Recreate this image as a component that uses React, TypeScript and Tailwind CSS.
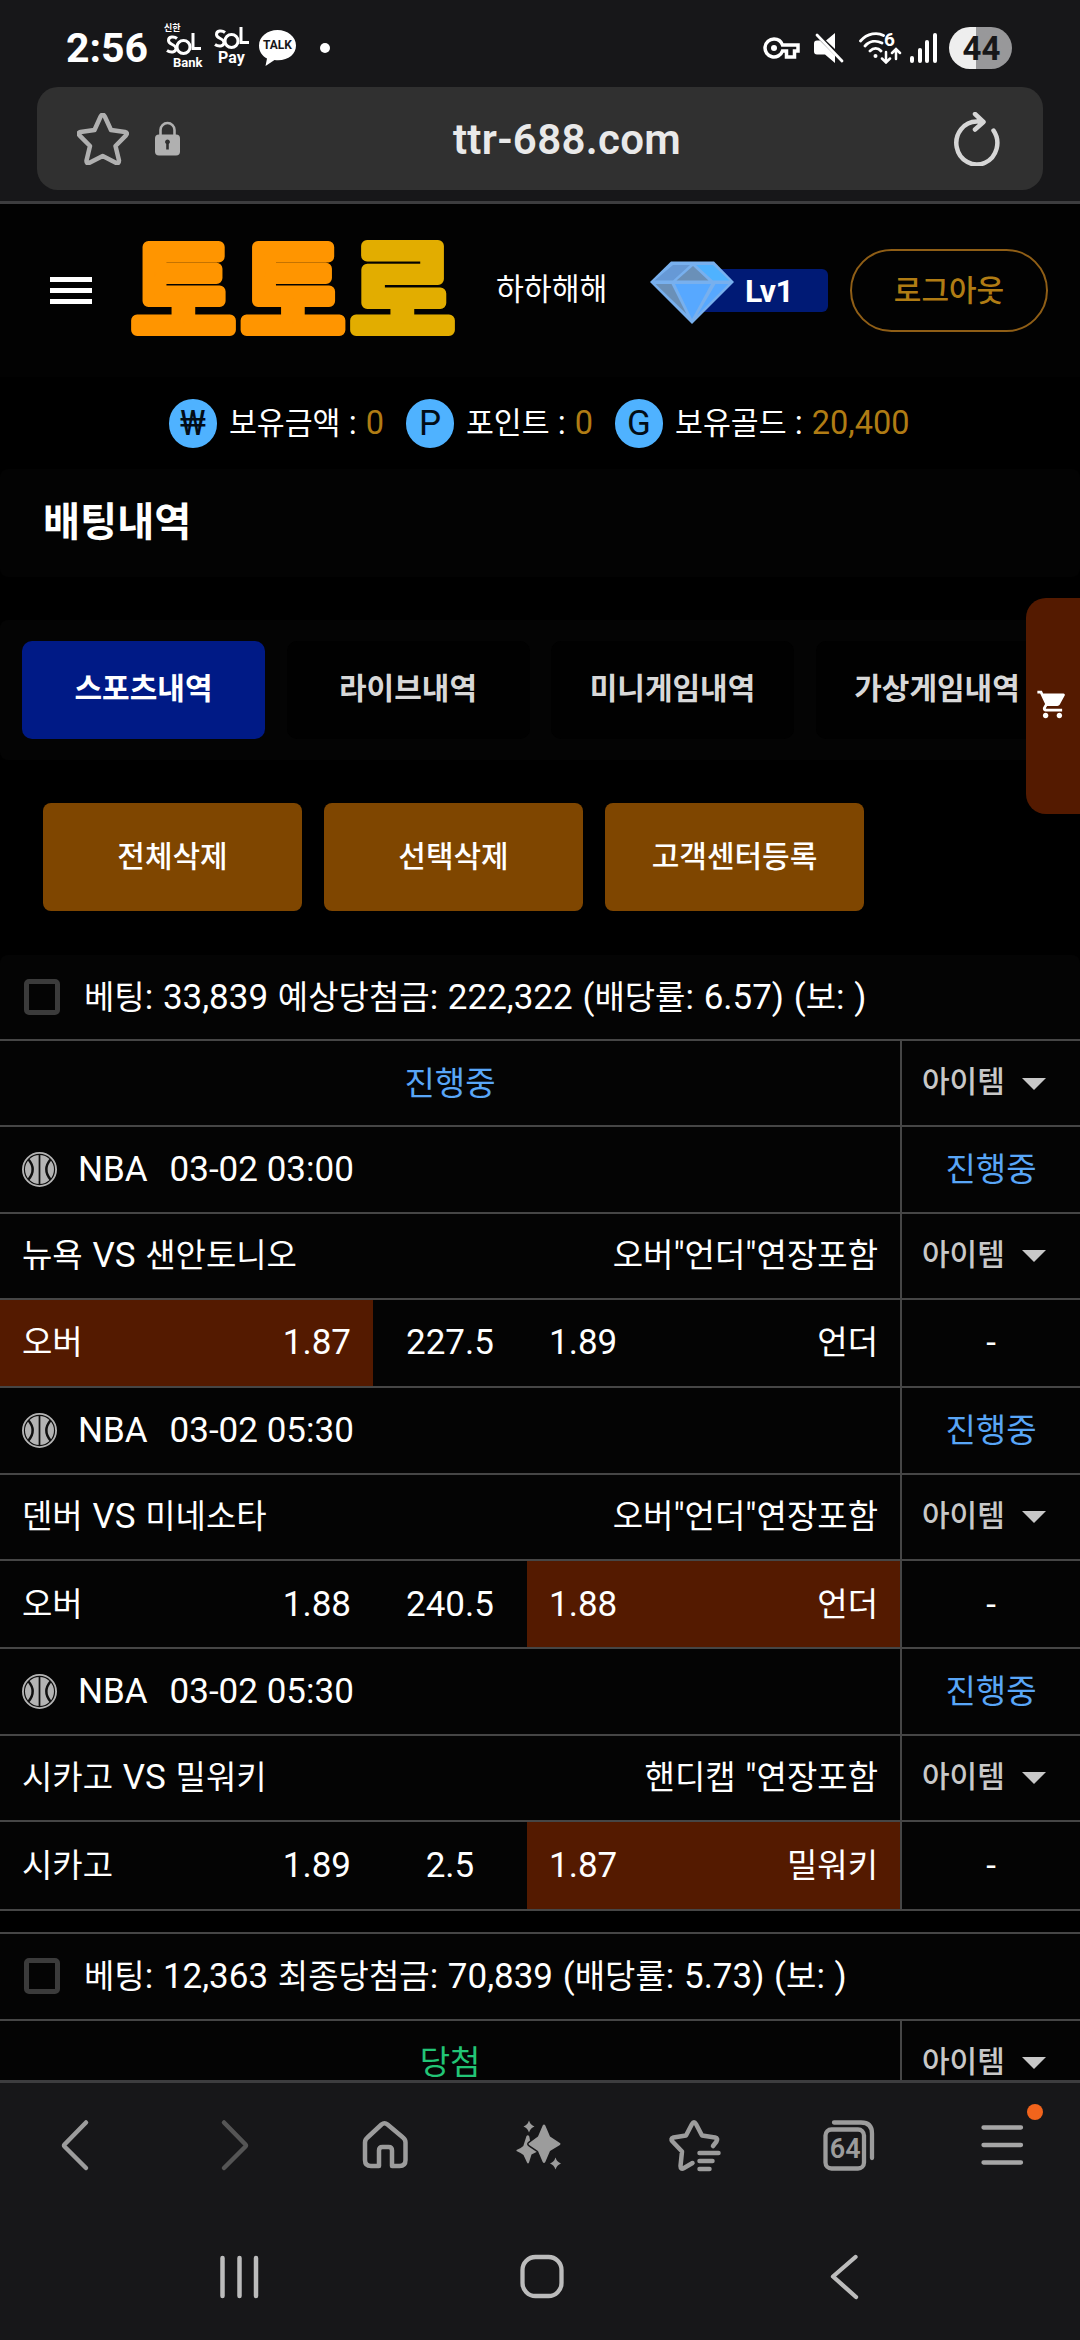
// App.tsx
import type { ReactNode } from 'react';
import { MdShoppingCart } from 'react-icons/md';

type Match = {
  time: string;
  teams: string;
  kind: string;
  left: string;
  leftOdds: string;
  line: string;
  rightOdds: string;
  right: string;
  pick: 'left' | 'right';
};

const tabs = ['스포츠내역', '라이브내역', '미니게임내역', '가상게임내역'];
const actions = ['전체삭제', '선택삭제', '고객센터등록'];

const matches: Match[] = [
  { time: '03-02 03:00', teams: '뉴욕 VS 샌안토니오', kind: '오버"언더"연장포함', left: '오버', leftOdds: '1.87', line: '227.5', rightOdds: '1.89', right: '언더', pick: 'left' },
  { time: '03-02 05:30', teams: '덴버 VS 미네소타', kind: '오버"언더"연장포함', left: '오버', leftOdds: '1.88', line: '240.5', rightOdds: '1.88', right: '언더', pick: 'right' },
  { time: '03-02 05:30', teams: '시카고 VS 밀워키', kind: '핸디캡 "연장포함', left: '시카고', leftOdds: '1.89', line: '2.5', rightOdds: '1.87', right: '밀워키', pick: 'right' },
];

// Hangul runs a little smaller than the latin text next to it
function Txt({ children }: { children: string }) {
  return (
    <span className="whitespace-pre [word-spacing:1px]">
      {children.split(/([가-힣]+)/).map((part, i) =>
        /[가-힣]/.test(part) ? <span key={i} className="text-[0.943em]">{part}</span> : part
      )}
    </span>
  );
}

function SolIcon() {
  return (
    <svg viewBox="0 0 35 23" className="h-[23px] w-[35px]" fill="none" stroke="#fff" strokeWidth="3">
      <path d="M11 5.500C8 3 2.500 3.500 2.500 7.500c0 4.500 7.500 3.500 7.500 8 0 4-5.500 4.500-9 2" />
      <circle cx="17.500" cy="14" r="6.500" />
      <path d="M27 0v15.500h8" />
    </svg>
  );
}

function StatusBar() {
  return (
    <div className="flex h-[87px] items-center pt-[9px] pl-[66px] pr-[68px] text-white">
      <div className="w-[98px] text-[41px] leading-none font-bold">2:56</div>
      <div className="relative -mt-[2px] flex h-[46px] w-[50px] flex-col">
        <span className="h-[9px] text-[9px] leading-[9px] font-bold">신한</span>
        <span className="pl-[2px]"><SolIcon /></span>
        <span className="pl-[9px] text-[13px] leading-[13px] font-bold">Bank</span>
      </div>
      <div className="flex w-[45px] flex-col pb-[3px]">
        <SolIcon />
        <span className="pl-[4px] text-[16px] leading-[16px] font-bold">Pay</span>
      </div>
      <div className="relative h-[37px] w-[37px]">
        <svg viewBox="0 0 37 37" className="h-full w-full">
          <path d="M18.500 0C8.500 0 0 6.500 0 15.500c0 6 3 10.500 8 13L6.500 36l9-6c13 1.500 21.500-5.500 21.500-14.500C37 6.500 28.500 0 18.500 0z" fill="#fff" />
        </svg>
        <span className="absolute inset-x-0 top-[9px] text-center text-[12px] leading-[13px] font-bold text-[#171719]">TALK</span>
      </div>
      <div className="ml-[24px] h-[10px] w-[10px] rounded-full bg-white" />

      <div className="ml-auto flex items-center">
        <svg viewBox="0 0 37 22" className="h-[22px] w-[37px]">
          <path d="M11 2a9 9 0 1 0 8.500 12h4v6h8v-6H35V8H19.500A9 9 0 0 0 11 2z" fill="none" stroke="#fff" strokeWidth="3.500" />
          <circle cx="11" cy="11" r="3" fill="#fff" />
        </svg>
        <svg viewBox="0 0 30 30" className="ml-[14px] h-[30px] w-[30px]">
          <path d="M0 10.500q0-3 3-3h3l15 15V30L11 21.500H3q-3 0-3-3zM12 7.500L21 0v16z" fill="#fff" />
          <path d="M3 2l25 26" stroke="#fff" strokeWidth="2.800" strokeLinecap="round" />
        </svg>
        <div className="relative ml-[15px] h-[32px] w-[43px]">
          <svg viewBox="0 0 43 32" className="h-full w-full" fill="none" stroke="#fff" strokeWidth="2.800" strokeLinecap="round">
            <path d="M1.500 9c7-8 17-9 23-5.500M6 14c4.500-5 11-6 17-3M11 19c3.500-3.500 8-3.500 11 0" />
            <circle cx="16.500" cy="24" r="2" fill="#fff" stroke="none" />
            <path d="M27 20v10M23 26.500l4 4 4-4M37 27V17.500M33 21l4-4 4 4" strokeWidth="2.500" />
          </svg>
          <span className="absolute -top-[1px] right-[7px] text-[19px] leading-[18px] font-bold">6</span>
        </div>
        <div className="ml-[8px] flex h-[30px] w-[27px] items-end justify-between">
          <span className="h-[7px] w-[4px] rounded-sm bg-white" />
          <span className="h-[15px] w-[4px] rounded-sm bg-white" />
          <span className="h-[23px] w-[4px] rounded-sm bg-white" />
          <span className="h-[30px] w-[4px] rounded-sm bg-white" />
        </div>
        <div className="ml-[12px] flex h-[42px] w-[63px] items-center justify-center rounded-full bg-linear-to-r from-[#eeeeee] from-[43%] to-[#98989a] to-[43%] pl-[2px] text-[33px] leading-none font-bold text-[#171719]">
          44
        </div>
      </div>
    </div>
  );
}

function AddressBar() {
  return (
    <div className="mx-[37px] flex h-[103px] items-center rounded-[21px] bg-[#303030]">
      <svg viewBox="0 0 52 52" className="ml-[40px] h-[52px] w-[52px]" fill="none" stroke="#b0b0b0" strokeWidth="4.500" strokeLinejoin="round">
        <path d="M23.600 3.500Q25.700-.2 27.800 3.500L34 17l14 2q3.200.8 1 3.400L38.500 33l3.500 14.500q0 3.800-3.200 2.300L25.700 43 12.500 49.800q-3.200 1.500-3-2.300L13 33 2.500 22.400q-2.200-2.600 1-3.400l14-2z" />
      </svg>
      <svg viewBox="0 0 25 35" className="ml-[26px] h-[35px] w-[25px]">
        <path d="M5.500 15V9a7 7 0 0 1 14 0v6" fill="none" stroke="#b0b0b0" strokeWidth="2.600" />
        <rect y="13.500" width="25" height="21" rx="4" fill="#b0b0b0" />
        <path d="M12.500 18.500a2.500 2.500 0 0 1 1.300 4.600v5.400h-2.600v-5.400a2.500 2.500 0 0 1 1.300-4.600z" fill="#303030" />
      </svg>
      <div className="flex-1 pt-[3px] text-center font-[Roboto] text-[42px] leading-none font-semibold tracking-[0.300px] text-[#e9e9e9]">ttr-688.com</div>
      <svg viewBox="0 0 46 54" className="mr-[43px] h-[54px] w-[46px]" fill="none" stroke="#d6d6d6" strokeWidth="4.500" strokeLinecap="round" strokeLinejoin="round">
        <path d="M39.500 18.500A20.500 21.500 0 1 1 23 9.500h5M21 2l8.500 8L21 17.500" />
      </svg>
    </div>
  );
}

// thin weight with a thick round stroke gives the bubbly ends
function Logo() {
  return (
    <svg viewBox="0 0 330 173" className="ml-[38px] h-[173px] w-[330px] overflow-visible text-[112px] font-medium" strokeWidth="12" strokeLinejoin="round">
      <text x="2" y="129" letterSpacing="6.500" fill="#ff9500" stroke="#ff9500">
        토토<tspan fill="#e2ad00" stroke="#e2ad00">로</tspan>
      </text>
    </svg>
  );
}

function Diamond() {
  return (
    <svg viewBox="0 0 84 63" className="absolute top-[12px] left-0 h-[63px] w-[84px]">
      <path d="M21 .5h43L84 21 42 63 0 21z" fill="#78b0ee" />
      <path d="M23 4h17L23 19.500H4.500z" fill="#6699d6" />
      <path d="M46 4h17l16.500 15.500H63z" fill="#4fb2ff" />
      <path d="M43 5l15.500 14.500h-32z" fill="#6a90b8" />
      <path d="M5.500 23h16l15 30z" fill="#6a90b8" />
      <path d="M25 23h36L42 58z" fill="#57a8ff" />
      <path d="M65.500 23h13L47 54.500z" fill="#57a8ff" />
    </svg>
  );
}

function SiteHeader() {
  return (
    <div className="flex h-[173px] shrink-0 items-center bg-[#020202] pl-[50px] pr-[32px]">
      <div className="flex w-[42px] flex-col gap-[6px]">
        <span className="h-[5px] bg-white" />
        <span className="h-[5px] bg-white" />
        <span className="h-[5px] bg-white" />
      </div>
      <Logo />
      <div className="ml-[36px] w-[114px] text-[30.300px] leading-none whitespace-nowrap text-white">하하해해</div>
      <div className="relative ml-[40px] flex h-[83px] w-[178px] items-center">
        <div className="ml-[42px] flex h-[43px] w-[136px] items-center rounded-[6px] bg-[#001a75] pl-[53px] font-[Roboto] text-[32px] leading-none font-bold tracking-[-0.500px] text-white">Lv1</div>
        <Diamond />
      </div>
      <button className="ml-auto h-[83px] w-[198px] rounded-full border-2 border-[#8f5e16] text-[30px] leading-none font-medium text-[#b07c14]">로그아웃</button>
    </div>
  );
}

function Balance({ badge, label, value }: { badge: string; label: string; value: string }) {
  return (
    <div className="flex items-center text-[33px] leading-none">
      <span className="mr-[12px] flex h-[49px] w-[48px] items-center justify-center rounded-full bg-[#4fb2ff] text-[35px] leading-none text-[#020c16]">{badge}</span>
      <span className="text-white"><span className="text-[30.300px]">{label}</span> : </span>
      <span className="ml-[9px] text-[32.500px] text-[#b07c14]">{value}</span>
    </div>
  );
}

function Row({ children, side, className = 'h-[86px]' }: { children: ReactNode; side?: ReactNode; className?: string }) {
  return (
    <div className={`flex shrink-0 border-b-2 border-[#464646] ${className}`}>
      <div className="flex min-w-0 flex-1 items-center">{children}</div>
      {side && (
        <div className="flex w-[180px] items-center justify-center border-l-2 border-[#464646]">{side}</div>
      )}
    </div>
  );
}

function ItemSelect() {
  return (
    <div className="flex w-full items-center pb-[2px] pl-[20px] text-[30px] leading-none font-medium text-[#c8c8c8]">
      아이템
      <svg viewBox="0 0 24 12" className="mt-[3px] ml-[17px] h-[12px] w-[24px]"><path d="M0 0h24L12 12z" fill="#c8c8c8" /></svg>
    </div>
  );
}

function BetTitle({ text }: { text: string }) {
  return (
    <>
      <span className="ml-[24px] h-[36px] w-[36px] rounded-[5px] border-[5px] border-[#3b3b3b]" />
      <span className="ml-[24px]"><Txt>{text}</Txt></span>
    </>
  );
}

function BallIcon() {
  return (
    <svg viewBox="0 0 36 36" className="ml-[22px] h-[35px] w-[35px]">
      <circle cx="18" cy="18" r="17" fill="#b4b4b4" stroke="#b4b4b4" strokeWidth="2" />
      <g fill="none" stroke="#101010" strokeWidth="1.800">
        <circle cx="18" cy="18" r="15.500" strokeWidth="1.200" />
        <path d="M18 2.500v31" />
        <path d="M6.500 7.500q9 10.500 0 21M29.500 7.500q-9 10.500 0 21" strokeWidth="2.500" />
      </g>
    </svg>
  );
}

function MatchRows({ m }: { m: Match }) {
  const on = 'bg-[#541a00]';
  return (
    <>
      <Row className="h-[86.500px]" side={<span className="text-[#59a6f7]"><Txt>진행중</Txt></span>}>
        <BallIcon />
        <span className="ml-[21px]">NBA</span>
        <span className="ml-[22px]">{m.time}</span>
      </Row>
      <Row side={<ItemSelect />}>
        <div className="flex w-full justify-between px-[22px]">
          <Txt>{m.teams}</Txt>
          <Txt>{m.kind}</Txt>
        </div>
      </Row>
      <Row className="h-[88.700px]" side={<span>-</span>}>
        <div className={`flex h-full w-[373px] items-center justify-between px-[22px] ${m.pick === 'left' ? on : ''}`}>
          <Txt>{m.left}</Txt>
          <span>{m.leftOdds}</span>
        </div>
        <div className="w-[154px] text-center">{m.line}</div>
        <div className={`flex h-full w-[373px] items-center justify-between px-[22px] ${m.pick === 'right' ? on : ''}`}>
          <span>{m.rightOdds}</span>
          <Txt>{m.right}</Txt>
        </div>
      </Row>
    </>
  );
}

function BrowserToolbar() {
  return (
    <div className="relative flex h-[123px] items-center justify-between pl-[45px] pr-[47px]">
      <svg viewBox="0 0 60 60" className="h-[60px] w-[60px]" fill="none" stroke="#9c9c9c" strokeWidth="4.500" strokeLinecap="round" strokeLinejoin="round">
        <path d="M41 7.500L19.500 29.500q-1 1 0 2L41 53" />
      </svg>
      <svg viewBox="0 0 60 60" className="h-[60px] w-[60px]" fill="none" stroke="#555" strokeWidth="4.500" strokeLinecap="round" strokeLinejoin="round">
        <path d="M24 7.500L45.500 29.500q1 1 0 2L24 53" />
      </svg>
      <svg viewBox="0 0 60 60" className="h-[60px] w-[60px]" fill="none" stroke="#9c9c9c" strokeWidth="4.500" strokeLinejoin="round">
        <path d="M27.500 9.500q3-2.500 6 0L49 22.500q2.500 2 2.500 5V45q0 6-6 6h-7.500V35.500q0-3.500-3.500-3.500h-6q-3.500 0-3.500 3.500V51H17q-6 0-6-6V27.500q0-3 2.500-5z" />
      </svg>
      <svg viewBox="0 0 60 60" className="h-[60px] w-[60px]" fill="#9c9c9c">
        <path d="M20 5.500q1.400 4.600 5.500 6-4.100 1.400-5.500 6-1.400-4.600-5.500-6 4.100-1.400 5.500-6z" />
        <path d="M46.500 42.500q1.400 4.600 5.500 6-4.100 1.400-5.500 6-1.400-4.600-5.500-6 4.100-1.400 5.500-6z" />
        <path d="M17.500 21q1.500-1.800 2.800.5l1.200 6.500 9 7.500-8 4-2.500 8q-1 2-2 0l-3.500-7.500q-2.500-2-7-4v-1q5-2 6.800-4z" />
        <path d="M33.700 10.500q1.300-2 2.600 0l4.700 11 9.500 6.300q2 1.200 0 2.400L41 36l-4.700 11q-1.300 2-2.600 0L29 36l-8.500-5.800q-2-1.200 0-2.400L29 21.500z" stroke="#171719" strokeWidth="3" paintOrder="stroke" />
      </svg>
      <svg viewBox="0 0 60 60" className="h-[60px] w-[60px]" fill="none" stroke="#9c9c9c" strokeWidth="4.500" strokeLinecap="round" strokeLinejoin="round">
        <path d="M49 31l3.500-4.500q2-3-1.500-4l-13-2-6-11.500q-2-3.500-4 0l-6 11.500-12.500 2q-3.500 1-1 4L18 36.500 16.500 51q0 4 3.500 2l8.500-5" />
        <path d="M35.500 38h19M35.500 46h13M35.500 54h10" />
      </svg>
      <div className="relative h-[60px] w-[60px]">
        <svg viewBox="0 0 60 60" className="h-full w-full" fill="none" stroke="#9c9c9c" strokeWidth="4.300" strokeLinecap="round">
          <rect x="7.500" y="14.500" width="38.500" height="39" rx="6" />
          <path d="M16 7.500h27q11 0 11 11V43" />
        </svg>
        <span className="absolute top-[21px] left-[7px] w-[40px] text-center font-[Roboto] text-[27px] leading-[27px] font-semibold text-[#9c9c9c]">64</span>
      </div>
      <svg viewBox="0 0 60 60" className="h-[60px] w-[60px]" fill="none" stroke="#a6a6a6" strokeWidth="4.300" strokeLinecap="round">
        <path d="M10.500 12.500h37.500M10.500 30h37.500M10.500 47.500h37.500" />
      </svg>
      <span className="absolute top-[21px] right-[37px] h-[16px] w-[16px] rounded-full bg-[#f2641c]" />
    </div>
  );
}

function NavBar() {
  return (
    <div className="flex h-[134px] items-start justify-between pt-[46px] pl-[209px] pr-[206px]">
      <svg viewBox="0 0 60 50" className="h-[50px] w-[60px]" stroke="#bcbcbc" strokeWidth="4.500" strokeLinecap="round">
        <path d="M13.500 6v38M30.500 6v38M47 6v38" />
      </svg>
      <svg viewBox="0 0 60 50" className="h-[50px] w-[60px]" fill="none" stroke="#bcbcbc" strokeWidth="4.300">
        <rect x="10.500" y="5" width="39" height="39" rx="13" />
      </svg>
      <svg viewBox="0 0 60 50" className="h-[50px] w-[60px]" fill="none" stroke="#bcbcbc" strokeWidth="4.300" strokeLinecap="round" strokeLinejoin="round">
        <path d="M41.500 5L19 24.500l23 20.500" />
      </svg>
    </div>
  );
}

export default function App() {
  return (
    <div className="flex h-[2340px] w-[1080px] flex-col overflow-hidden bg-[#171719] font-['Roboto','Noto_Sans_CJK_KR',sans-serif]">
      <StatusBar />
      <AddressBar />

      <div className="relative mt-[11px] flex h-[1882px] flex-col overflow-hidden border-y-[3px] border-[#3d3d3f] bg-black text-white">
        <SiteHeader />

        <div className="flex h-[92px] shrink-0 items-center gap-[22px] pl-[169px]">
          <Balance badge="₩" label="보유금액" value="0" />
          <Balance badge="P" label="포인트" value="0" />
          <Balance badge="G" label="보유골드" value="20,400" />
        </div>

        <h1 className="flex h-[108px] shrink-0 items-center rounded-lg bg-[#030303] pl-[43px] text-[40.300px] leading-none font-bold">배팅내역</h1>

        <div className="mt-[43px] flex h-[140px] shrink-0 items-center gap-[21.500px] overflow-hidden rounded-lg bg-[#040404] pl-[22px]">
          {tabs.map((tab, i) => (
            <div
              key={tab}
              className={`flex h-[98px] w-[243px] shrink-0 items-center justify-center rounded-[10px] pb-[2px] text-[30px] leading-none font-bold ${i === 0 ? 'bg-[#001a86] text-white' : 'bg-[#010101] text-[#d8d8d8]'}`}
            >
              {tab}
            </div>
          ))}
        </div>

        <div className="mt-[43px] flex shrink-0 gap-[22px] pl-[43px]">
          {actions.map((label) => (
            <button key={label} className="h-[108px] w-[259px] rounded-[8px] bg-[#7f4600] text-[30px] leading-none font-medium text-white">
              {label}
            </button>
          ))}
        </div>

        <div className="mt-[44px] flex shrink-0 flex-col rounded-t-lg bg-[#040404] text-[35px] leading-none">
          <Row><BetTitle text="베팅: 33,839 예상당첨금: 222,322 (배당률: 6.57) (보: )" /></Row>
          <Row side={<ItemSelect />}>
            <span className="w-full text-center text-[#59a6f7]"><Txt>진행중</Txt></span>
          </Row>
          {matches.map((m, i) => <MatchRows key={i} m={m} />)}
          <div className="h-[23px] border-b-2 border-[#464646] bg-black" />
          <Row className="h-[87px]"><BetTitle text="베팅: 12,363 최종당첨금: 70,839 (배당률: 5.73) (보: )" /></Row>
          <Row side={<ItemSelect />}>
            <span className="w-full text-center text-[#22c576]"><Txt>당첨</Txt></span>
          </Row>
        </div>

        {/* floating bet cart */}
        <div className="absolute top-[394px] right-0 flex h-[216px] w-[54px] items-center rounded-l-[20px] bg-[#541a00] pb-[3px] pl-[10px]">
          <MdShoppingCart className="h-[33px] w-[33px] text-white" />
        </div>
      </div>

      <BrowserToolbar />
      <NavBar />
    </div>
  );
}
